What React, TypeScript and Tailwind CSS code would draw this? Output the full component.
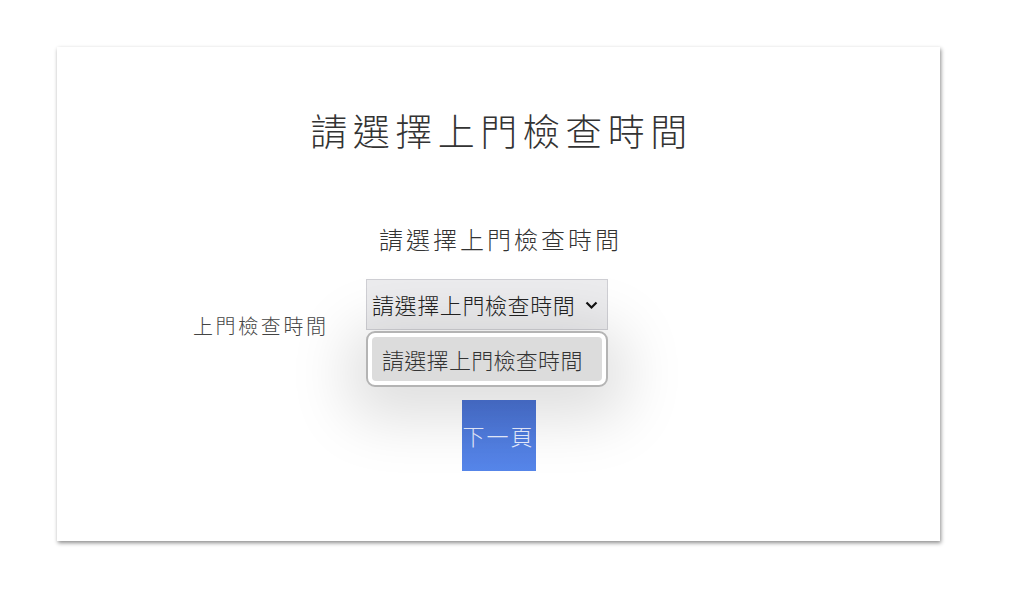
import React from 'react'

const cjk = { fontFamily: '"Noto Sans CJK TC", "Noto Sans CJK SC", sans-serif' }

function FakeSelect() {
    return (
        <div className="relative w-[242px]">
            <div className="flex h-[51px] items-center justify-between border border-[#cfcfd4] bg-[#ececee] pl-[5px] pr-[9px] text-[22px] font-light tracking-[0.6px] text-[#222]">
                <span>請選擇上門檢查時間</span>
                <svg width="13" height="9" viewBox="0 0 13 9" className="mt-[1px]">
                    <path d="M1.5 1.5 L6.5 6.5 L11.5 1.5" fill="none" stroke="#111" strokeWidth="2.2" />
                </svg>
            </div>

            {/* open dropdown */}
            <div className="absolute left-0 top-[52px] z-10 w-[242px] rounded-[9px] border-2 border-[#b4b4b4] bg-white p-[4px] shadow-[0_14px_60px_18px_rgba(0,0,0,0.13)]">
                <div className="flex h-[44px] items-center rounded-[4px] bg-[#dcdcdc] pl-[10px] text-[22px] font-light tracking-[0.3px] text-[#333]">
                    請選擇上門檢查時間
                </div>
            </div>
        </div>
    )
}

export default function App() {
    return (
        <div className="min-h-[595px] w-full bg-white pt-[47px]" style={cjk}>
            <div className="ml-[57px] h-[494px] w-[883px] bg-white shadow-[1px_2px_4px_rgba(0,0,0,0.45)]">
                <h1 className="pt-[65px] pl-[6px] text-center text-[37px] font-light leading-none tracking-[5.5px] text-[#333]">
                    請選擇上門檢查時間
                </h1>

                <h2 className="mt-[78px] pl-[4px] text-center text-[24px] font-light leading-none tracking-[3px] text-[#333]">
                    請選擇上門檢查時間
                </h2>

                <div className="mt-[28px] flex items-start pl-[136px]">
                    <label className="w-[173px] pt-[37px] text-[20px] font-light leading-none tracking-[2.6px] text-[#444]">
                        上門檢查時間
                    </label>
                    <FakeSelect />
                </div>

                <div className="mt-[64px] flex justify-center">
                    <button className="h-[71px] w-[74px] bg-gradient-to-b from-[#4a72d3] to-[#5686ea] text-[22px] font-light tracking-[2px] text-[#e8eeff]">
                        下一頁
                    </button>
                </div>
            </div>
        </div>
    )
}
